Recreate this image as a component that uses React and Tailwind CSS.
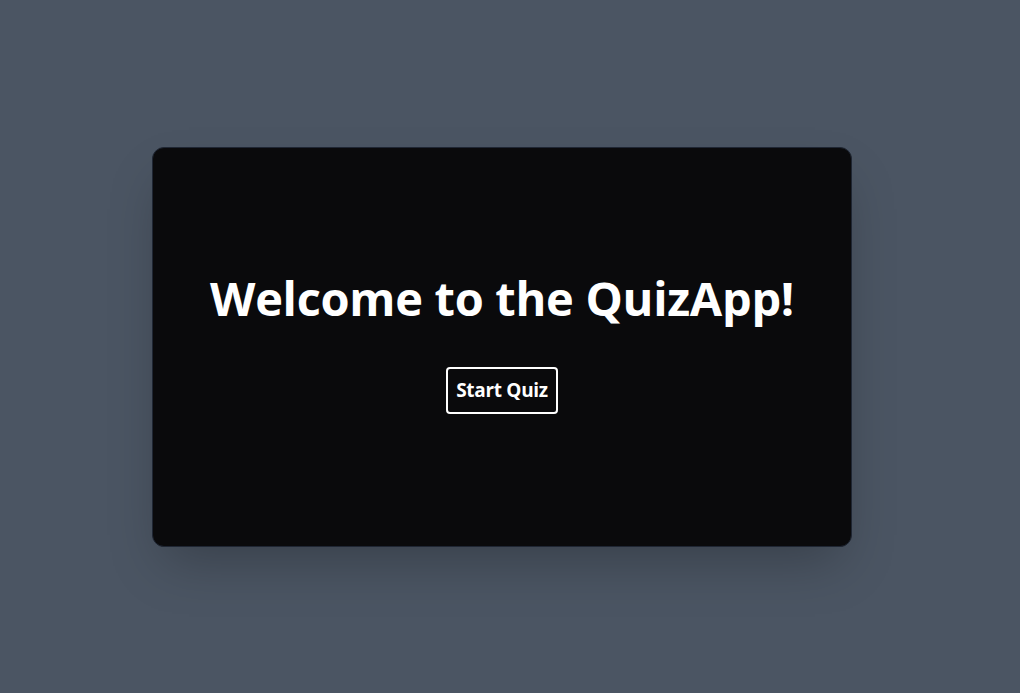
export default function App() {
  return (
    <div className="min-h-screen bg-[#4b5563] flex items-center justify-center" style={{ fontFamily: '"Open Sans", "Noto Sans", sans-serif' }}>
      <div className="w-[700px] h-[400px] mr-4 bg-[#0a0a0c] border border-[#1f2633] rounded-xl shadow-2xl flex flex-col items-center justify-center">
        <div className="flex flex-col items-center mb-[10px]">
          <h1 className="text-[47px] font-bold text-white tracking-[-0.3px] leading-[56px]">
            Welcome to the QuizApp!
          </h1>
          <button className="mt-[41px] px-[8px] py-[9px] border-2 border-white rounded text-white text-[19px] font-bold leading-[25px] tracking-[-0.3px]">
            Start Quiz
          </button>
        </div>
      </div>
    </div>
  );
}
